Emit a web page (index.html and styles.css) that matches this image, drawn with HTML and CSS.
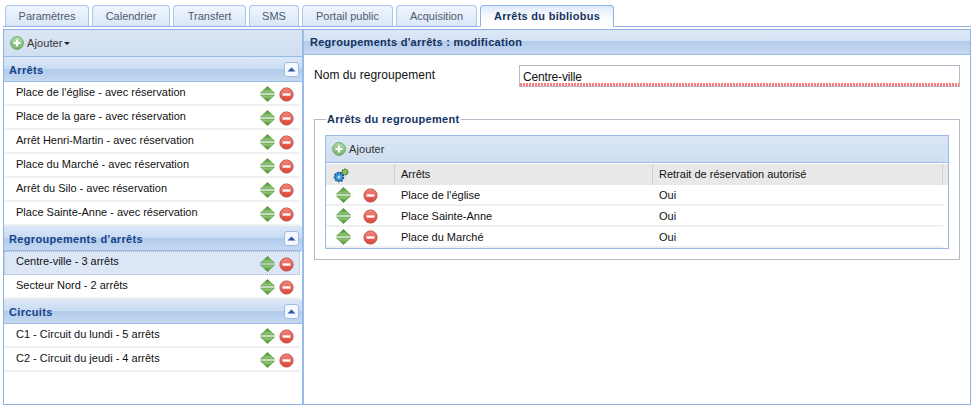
FILE: index.html
```html
<!DOCTYPE html>
<html lang="fr">
<head>
<meta charset="utf-8">
<title>Arrêts du bibliobus</title>
<link rel="stylesheet" href="styles.css">
</head>
<body>
<svg class="defs" width="0" height="0" aria-hidden="true">
  <defs>
    <linearGradient id="gAdd" x1="0" y1="0" x2="0" y2="1"><stop offset="0" stop-color="#b6dcae"/><stop offset="1" stop-color="#6fb566"/></linearGradient>
    <linearGradient id="gDel" x1="0" y1="0" x2="0" y2="1"><stop offset="0" stop-color="#f0897f"/><stop offset="1" stop-color="#d9443a"/></linearGradient>
    <linearGradient id="gUp" x1="0" y1="0" x2="0" y2="1"><stop offset="0" stop-color="#3f8f22"/><stop offset="1" stop-color="#a4d08c"/></linearGradient>
    <linearGradient id="gDown" x1="0" y1="0" x2="0" y2="1"><stop offset="0" stop-color="#a4d08c"/><stop offset="1" stop-color="#3f8f22"/></linearGradient>
    <symbol id="i-add" viewBox="0 0 14 14">
      <circle cx="7" cy="7" r="6.4" fill="url(#gAdd)" stroke="#6da866"/>
      <path d="M7 3.6v6.8M3.6 7h6.8" stroke="#fff" stroke-width="2.2"/>
    </symbol>
    <symbol id="i-del" viewBox="0 0 15 15">
      <circle cx="7.5" cy="7.5" r="6.6" fill="url(#gDel)" stroke="#c9564d"/>
      <path d="M3.6 7.5h7.8" stroke="#fff" stroke-width="2.4"/>
    </symbol>
    <symbol id="i-move" viewBox="0 0 15 16">
      <path d="M7.5 .5 14.5 7H.5z" fill="url(#gUp)" stroke="#3d8a1f" stroke-width=".6"/>
      <path d="M.5 9h14l-7 6.5z" fill="url(#gDown)" stroke="#3d8a1f" stroke-width=".6"/>
    </symbol>
    <symbol id="i-gears" viewBox="0 0 16 16">
      <circle cx="12" cy="5" r="2.8" fill="#8fc25a" stroke="#3f7d2a" stroke-width="1.4" stroke-dasharray="1.6 .8"/>
      <circle cx="6" cy="10" r="4.4" fill="#3b93dc" stroke="#17558f" stroke-width="1.8" stroke-dasharray="2 1"/>
      <circle cx="6" cy="10" r="1.5" fill="#bfe0f7"/>
    </symbol>
    <symbol id="i-collapse" viewBox="0 0 15 15">
      <rect x=".5" y=".5" width="14" height="14" rx="2.5" fill="#f4f8fe" stroke="#9dbbe4"/>
      <path d="M3.5 9.5 7.5 5.5l4 4z" fill="#2f57a8"/>
    </symbol>
  </defs>
</svg>

<nav class="tabs">
  <a class="tab t1">Paramètres</a>
  <a class="tab t2">Calendrier</a>
  <a class="tab t3">Transfert</a>
  <a class="tab t4">SMS</a>
  <a class="tab t5">Portail public</a>
  <a class="tab t6">Acquisition</a>
  <a class="tab t7 active">Arrêts du bibliobus</a>
</nav>

<main class="shell">
  <aside class="side">
    <div class="toolbar side-bar">
      <svg class="ico14"><use href="#i-add"/></svg>
      <span>Ajouter</span><i class="caret"></i>
    </div>

    <section>
      <h2 class="acc">Arrêts<svg class="ico15"><use href="#i-collapse"/></svg></h2>
      <ul class="list">
        <li><span>Place de l'église - avec réservation</span><svg class="move"><use href="#i-move"/></svg><svg class="del"><use href="#i-del"/></svg></li>
        <li><span>Place de la gare - avec réservation</span><svg class="move"><use href="#i-move"/></svg><svg class="del"><use href="#i-del"/></svg></li>
        <li><span>Arrêt Henri-Martin - avec réservation</span><svg class="move"><use href="#i-move"/></svg><svg class="del"><use href="#i-del"/></svg></li>
        <li><span>Place du Marché - avec réservation</span><svg class="move"><use href="#i-move"/></svg><svg class="del"><use href="#i-del"/></svg></li>
        <li><span>Arrêt du Silo - avec réservation</span><svg class="move"><use href="#i-move"/></svg><svg class="del"><use href="#i-del"/></svg></li>
        <li><span>Place Sainte-Anne - avec réservation</span><svg class="move"><use href="#i-move"/></svg><svg class="del"><use href="#i-del"/></svg></li>
      </ul>
    </section>

    <section>
      <h2 class="acc">Regroupements d'arrêts<svg class="ico15"><use href="#i-collapse"/></svg></h2>
      <ul class="list">
        <li class="selected"><span>Centre-ville - 3 arrêts</span><svg class="move"><use href="#i-move"/></svg><svg class="del"><use href="#i-del"/></svg></li>
        <li><span>Secteur Nord - 2 arrêts</span><svg class="move"><use href="#i-move"/></svg><svg class="del"><use href="#i-del"/></svg></li>
      </ul>
    </section>

    <section>
      <h2 class="acc">Circuits<svg class="ico15"><use href="#i-collapse"/></svg></h2>
      <ul class="list">
        <li><span>C1 - Circuit du lundi - 5 arrêts</span><svg class="move"><use href="#i-move"/></svg><svg class="del"><use href="#i-del"/></svg></li>
        <li><span>C2 - Circuit du jeudi - 4 arrêts</span><svg class="move"><use href="#i-move"/></svg><svg class="del"><use href="#i-del"/></svg></li>
      </ul>
    </section>
  </aside>

  <div class="content">
    <h1 class="title">Regroupements d'arrêts : modification</h1>
    <div class="form">
      <div class="field">
        <label class="field-label" for="nom">Nom du regroupement</label>
        <input class="field-input" id="nom" type="text" value="Centre-ville">
      </div>
      <fieldset class="group">
        <legend>Arrêts du regroupement</legend>
        <div class="grid">
          <div class="toolbar grid-bar">
            <svg class="ico14"><use href="#i-add"/></svg>
            <span>Ajouter</span>
          </div>
          <div class="row head">
            <div class="c0"><svg class="gears"><use href="#i-gears"/></svg></div>
            <div class="c1">Arrêts</div>
            <div class="c2">Retrait de réservation autorisé</div>
            <div class="c3"></div>
          </div>
          <div class="row">
            <div class="c0"><svg class="move"><use href="#i-move"/></svg><svg class="del"><use href="#i-del"/></svg></div>
            <div class="c1">Place de l'église</div>
            <div class="c2">Oui</div>
          </div>
          <div class="row">
            <div class="c0"><svg class="move"><use href="#i-move"/></svg><svg class="del"><use href="#i-del"/></svg></div>
            <div class="c1">Place Sainte-Anne</div>
            <div class="c2">Oui</div>
          </div>
          <div class="row">
            <div class="c0"><svg class="move"><use href="#i-move"/></svg><svg class="del"><use href="#i-del"/></svg></div>
            <div class="c1">Place du Marché</div>
            <div class="c2">Oui</div>
          </div>
        </div>
      </fieldset>
    </div>
  </div>
</main>
</body>
</html>
```

FILE: styles.css
```css
* { box-sizing: border-box; }
html, body { margin: 0; height: 100%; }
body {
  width: 976px;
  height: 410px;
  padding: 5px 5px 5px 3px;
  background: #fff;
  color: #111;
  font: 11px/14px "Liberation Sans", Arial, sans-serif;
  overflow: hidden;
}
.defs { position: absolute; }

.tabs {
  display: flex;
  height: 22px;
  padding-left: 2px;
  gap: 3px;
  border-bottom: 1px solid #8db2e3;
}
.tab {
  height: 22px;
  border: 1px solid #a9c5ea;
  border-bottom: 1px solid #8db2e3;
  border-radius: 4px 4px 0 0;
  background: linear-gradient(#eff5fd, #d9e7f9);
  color: #4f5b6d;
  text-align: center;
  line-height: 20px;
}
.t1 { width: 84px; }
.t2 { width: 78px; }
.t3 { width: 73px; }
.t4 { width: 50px; }
.t5 { width: 91px; }
.t6 { width: 81px; }
.t7 { width: 134px; }
.tab.active {
  height: 22px;
  border-color: #8db2e3;
  border-bottom-color: #fff;
  background: linear-gradient(#dfeafa, #fff 70%);
  color: #15325e;
  font-weight: bold;
  letter-spacing: .28px;
}

.shell {
  display: flex;
  height: 376px;
  margin-top: 2px;
  border: 1px solid #8db2e3;
}
.side {
  width: 300px;
  flex: none;
  border-right: 2px solid #99bbe8;
}
.toolbar {
  display: flex;
  align-items: center;
  background: linear-gradient(#dae6f5, #cfdef0);
  border-bottom: 1px solid #99bbe8;
  letter-spacing: .1px;
}
.side-bar { height: 27px; padding-left: 6px; gap: 3px; color: #333; }
.ico14 { width: 14px; height: 14px; flex: none; }
.caret {
  width: 0;
  height: 0;
  margin-left: -2px;
  border: 3px solid transparent;
  border-top-color: #222;
  border-bottom: 0;
}
.acc {
  display: flex;
  align-items: center;
  justify-content: space-between;
  height: 25px;
  margin: 0;
  padding: 1px 3px 0 5px;
  font-size: 11px;
  font-weight: bold;
  letter-spacing: .33px;
  color: #15428b;
  background: linear-gradient(#dce8f7 0, #c9dbf3 48%, #b0cbeb 50%, #c5d8f1 100%);
  border-bottom: 1px solid #99bbe8;
}
.ico15 { width: 15px; height: 15px; flex: none; }
.list { margin: 0; padding: 0; list-style: none; }
.list li {
  display: flex;
  align-items: center;
  height: 24px;
  padding: 0 1px 0 12px;
  margin-right: 2px;
  border-bottom: 2px solid #f0f0f0;
  background: #fff;
}
.list li span { flex: 1; padding-bottom: 3px; }
.list li.selected {
  background: #dce6f6;
  border: 1px dotted #9db5d8;
  padding-left: 11px;
  padding-right: 0;
}
.list li.selected span { padding-bottom: 5px; }
.move { width: 15px; height: 16px; flex: none; }
.del { width: 15px; height: 15px; flex: none; }
.list .move { margin-top: 1px; }
.list .del { margin: 2px 5px 0 4px; }

.content { flex: 1; min-width: 0; }
.title {
  height: 25px;
  margin: 0;
  padding: 0 0 1px 6px;
  font-size: 11px;
  line-height: 24px;
  font-weight: bold;
  letter-spacing: .28px;
  color: #15325e;
  background: linear-gradient(#dde8f6 0, #d5e3f4 44%, #b2cbea 46%, #c5d8f1 100%);
  border-bottom: 1px solid #99bbe8;
}
.form { padding: 10px 10px 0; }
.field { display: flex; height: 22px; }
.field-label { width: 205px; flex: none; font-size: 12px; line-height: 20px; letter-spacing: .05px; }
.field-input {
  width: 441px;
  height: 22px;
  padding: 2px 3px 0;
  border: 1px solid #b7b7c5;
  font: 12px "Liberation Sans", Arial, sans-serif;
  letter-spacing: -.15px;
  color: #111;
  outline: 0;
  background: #fff repeating-linear-gradient(90deg, #ff7b7b 0 2px, #fff 2px 3px) left bottom / 100% 3px no-repeat;
}
.group {
  margin: 25px 0 0;
  padding: 9px 10px 11px;
  height: 148px;
  border: 1px solid #b7b7c5;
  min-width: 0;
}
.group legend {
  padding: 0 1px;
  margin-left: 1px;
  font-weight: bold;
  letter-spacing: .3px;
  color: #15325e;
  line-height: 14px;
}
.grid {
  border: 1px solid #99bbe8;
  background: #fff;
  height: 114px;
}
.grid-bar { height: 27px; padding-left: 6px; gap: 3px; color: #333; }
.row {
  display: flex;
  height: 21px;
  margin-right: 5px;
  border-bottom: 2px solid #f0f0f0;
  line-height: 20px;
}
.c0 { width: 68px; flex: none; display: flex; align-items: center; padding: 1px 0 0 10px; }
.c0 .del { margin: 0 0 0 12px; }
.c1 { width: 258px; flex: none; padding-left: 7px; }
.c2 { width: 290px; flex: none; padding-left: 7px; }
.head {
  height: 21px;
  margin-right: 0;
  margin-top: 1px;
  border-bottom: 0;
  background: #e8e8e8;
  line-height: 20px;
}
.head .c1, .head .c2 { border-left: 1px solid #d0d0d0; padding-left: 6px; }
.head .c3 { flex: 1; border-left: 1px solid #d0d0d0; }
.head .c0 { padding: 0 0 0 7px; }
.gears { width: 16px; height: 16px; }
```
